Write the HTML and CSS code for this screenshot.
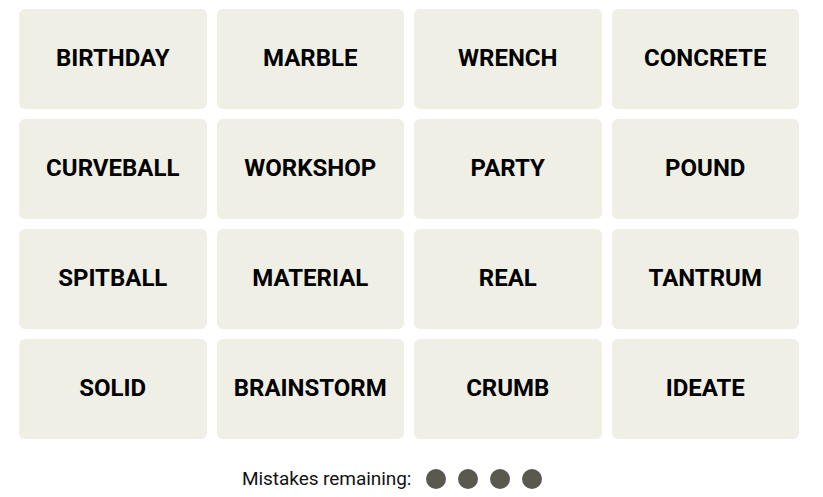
FILE: index.html
```html
<!DOCTYPE html>
<html>
<head>
<meta charset="utf-8">
<link rel="stylesheet" href="styles.css">
</head>
<body>
<div class="board">
  <div class="tile">BIRTHDAY</div>
  <div class="tile">MARBLE</div>
  <div class="tile">WRENCH</div>
  <div class="tile">CONCRETE</div>
  <div class="tile">CURVEBALL</div>
  <div class="tile">WORKSHOP</div>
  <div class="tile">PARTY</div>
  <div class="tile">POUND</div>
  <div class="tile">SPITBALL</div>
  <div class="tile">MATERIAL</div>
  <div class="tile">REAL</div>
  <div class="tile">TANTRUM</div>
  <div class="tile">SOLID</div>
  <div class="tile">BRAINSTORM</div>
  <div class="tile">CRUMB</div>
  <div class="tile">IDEATE</div>
</div>
<div class="mistakes">
  <span class="label">Mistakes remaining:</span>
  <span class="dots">
    <span class="dot"></span>
    <span class="dot"></span>
    <span class="dot"></span>
    <span class="dot"></span>
  </span>
</div>
</body>
</html>
```
FILE: styles.css
```css
html, body {
  margin: 0;
  padding: 0;
  background: #ffffff;
}
body {
  font-family: Roboto, "Liberation Sans", sans-serif;
  color: #000;
}
.board {
  margin: 9px 0 0 19px;
  width: 780px;
  display: grid;
  grid-template-columns: repeat(4, 1fr);
  grid-auto-rows: 100px;
  gap: 10px;
}
.tile {
  background: #efefe6;
  border-radius: 6px;
  display: flex;
  align-items: center;
  justify-content: center;
  padding-bottom: 3px;
  box-sizing: border-box;
  font-weight: 700;
  font-size: 24px;
  color: #000;
}
.mistakes {
  margin: 30px 0 0 242px;
  height: 20px;
  display: flex;
  align-items: center;
}
.label {
  font-size: 19px;
  letter-spacing: -0.06px;
  color: #121212;
  padding-bottom: 2px;
}
.dots {
  display: flex;
  gap: 12px;
  margin-left: 15px;
}
.dot {
  width: 20px;
  height: 20px;
  border-radius: 50%;
  background: #5a594e;
}
```
